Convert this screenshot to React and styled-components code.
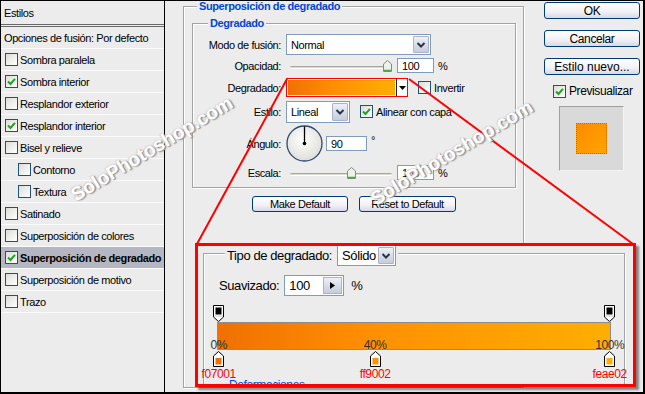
import React from "react";
import styled, { createGlobalStyle } from "styled-components";

const GlobalStyle = createGlobalStyle`
  html, body { margin: 0; padding: 0; background: #ececec; }
  body {
    font-family: "Liberation Sans", Arial, sans-serif;
    font-size: 11px;
    letter-spacing: -0.4px;
    color: #000;
  }
  * { box-sizing: border-box; }
`;

const styleItems = [
  { label: "Sombra paralela" },
  { label: "Sombra interior", checked: true },
  { label: "Resplandor exterior" },
  { label: "Resplandor interior", checked: true },
  { label: "Bisel y relieve" },
  { label: "Contorno", indent: true },
  { label: "Textura", indent: true },
  { label: "Satinado" },
  { label: "Superposición de colores" },
  { label: "Superposición de degradado", checked: true, active: true },
  { label: "Superposición de motivo" },
  { label: "Trazo" },
];

const colorStops = [
  { pct: 0, hex: "f07001", color: "#f07001" },
  { pct: 40, hex: "ff9002", color: "#ff9002" },
  { pct: 100, hex: "feae02", color: "#feae02" },
];

// stop centre inside the editor box
const stopX = (pct) => 8.7 + (pct / 100) * 391;

const Frame = styled.div`
  position: relative;
  width: 645px;
  height: 394px;
  display: flex;
  border: 1px solid #000;
  border-right-width: 2px;
  border-bottom-width: 2px;
  background: #ececec;
  overflow: hidden;
`;

/* ---------- left list ---------- */
const LeftPanel = styled.div`
  width: 164px;
  flex-shrink: 0;
  border-right: 1px solid #000;
  display: flex;
  flex-direction: column;
`;

const PanelHeader = styled.div`
  height: 26px;
  display: flex;
  align-items: center;
  padding-left: 3px;
  border-bottom: 3px double #6a6a6a;
`;

const BlendRow = styled.div`
  height: 22px;
  display: flex;
  align-items: center;
  padding-left: 3px;
  border-bottom: 1px solid #fbfbfb;
`;

const StyleRow = styled.div`
  height: 22px;
  display: flex;
  align-items: center;
  gap: 2px;
  white-space: nowrap;
  padding-left: ${(p) => (p.$indent ? 17 : 4)}px;
  border-bottom: 1px solid #fbfbfb;
  background: ${(p) => (p.$active ? "#b4b7c2" : "transparent")};
  font-weight: ${(p) => (p.$active ? "bold" : "normal")};
`;

/* ---------- generic controls ---------- */
const Box = styled.span`
  width: 13px;
  height: 13px;
  flex-shrink: 0;
  display: inline-flex;
  align-items: center;
  justify-content: center;
  border: 1px solid #1c5180;
  background: linear-gradient(135deg, #dcdcd7, #ffffff);
  margin-left: ${(p) => p.$ml || 0}px;
`;

const Checkbox = ({ checked, ml }) => (
  <Box $ml={ml}>
    {checked && (
      <svg width="9" height="9" viewBox="0 0 9 9">
        <path d="M1 4.5 L3.5 7 L8 1.8" stroke="#21a121" strokeWidth="2" fill="none" />
      </svg>
    )}
  </Box>
);

const SelectBox = styled.div`
  width: ${(p) => p.$w}px;
  height: ${(p) => p.$h || 21}px;
  display: flex;
  align-items: stretch;
  border: 1px solid #7f9db9;
  background: #fff;
  flex-shrink: 0;
`;

const SelectText = styled.span`
  flex: 1;
  display: flex;
  align-items: center;
  padding-left: 4px;
  font-size: ${(p) => p.$fs || 11}px;
`;

const DropBtn = styled.span`
  width: 16px;
  margin: 1px;
  display: flex;
  align-items: center;
  justify-content: center;
  border: 1px solid #aab3ca;
  border-radius: 1px;
  background: linear-gradient(#eef0f6, #c6ccdc);
`;

const Chevron = () => (
  <svg width="10" height="8" viewBox="0 0 10 8">
    <path d="M1.5 2 L5 5.5 L8.5 2" stroke="#2d3142" strokeWidth="2" fill="none" />
  </svg>
);

const Select = ({ value, w, h, fs }) => (
  <SelectBox $w={w} $h={h}>
    <SelectText $fs={fs}>{value}</SelectText>
    <DropBtn>
      <Chevron />
    </DropBtn>
  </SelectBox>
);

const Input = styled.div`
  width: ${(p) => p.$w}px;
  height: ${(p) => p.$h || 15}px;
  margin-left: ${(p) => p.$ml || 0}px;
  flex-shrink: 0;
  display: flex;
  align-items: center;
  padding-left: 4px;
  border: 1px solid #7f9db9;
  background: #fff;
  font-size: ${(p) => p.$fs || 11}px;
`;

const Unit = styled.span`
  margin-left: ${(p) => p.$ml || 4}px;
  align-self: ${(p) => (p.$top ? "flex-start" : "center")};
  margin-top: ${(p) => (p.$top ? 9 : 0)}px;
  font-size: ${(p) => p.$fs || 11}px;
`;

const SliderWrap = styled.div`
  position: relative;
  width: 102px;
  height: 12px;
  margin-left: 4px;
`;

const Track = styled.div`
  position: absolute;
  left: 0;
  right: 0;
  top: 6px;
  height: 3px;
  border-radius: 2px;
  border-top: 1px solid #a9a79c;
  border-bottom: 1px solid #fff;
  background: #dcdad0;
`;

const Thumb = styled.svg`
  position: absolute;
  top: 0;
`;

const Slider = ({ pct }) => (
  <SliderWrap>
    <Track />
    <Thumb width="9" height="12" viewBox="0 0 9 12" style={{ left: `${(pct / 100) * 93}px` }}>
      <path d="M4.5 0.5 L8.5 4 V11.5 H0.5 V4 Z" fill="#eef1ea" stroke="#7c8f78" />
      <path d="M1 10.5 H8" stroke="#3fae3f" strokeWidth="1.5" />
    </Thumb>
  </SliderWrap>
);

const XpButton = styled.div`
  width: ${(p) => p.$w}px;
  height: ${(p) => p.$h || 16}px;
  display: flex;
  align-items: center;
  justify-content: center;
  border: 1px solid #003c74;
  border-radius: 3px;
  background: linear-gradient(#ffffff, #f1f1f6 60%, #d6d8e8);
  font-size: ${(p) => p.$fs || 11}px;
  letter-spacing: ${(p) => p.$ls ?? -0.4}px;
`;

/* ---------- middle column ---------- */
const Main = styled.div`
  flex: 1;
  display: flex;
`;

const MiddleCol = styled.div`
  width: 365px;
  flex-shrink: 0;
  padding: 5px 0 0 18px;
`;

const Group = styled.div`
  position: relative;
  width: ${(p) => p.$w}px;
  height: ${(p) => p.$h}px;
  border: 1px solid #a3a3a3;
  box-shadow: inset 1px 1px 0 #fff, 1px 1px 0 #fff;
  padding: ${(p) => p.$pad || "0"};
`;

const Legend = styled.div`
  position: absolute;
  top: ${(p) => p.$top}px;
  left: ${(p) => p.$left}px;
  padding: 0 2px;
  background: #ececec;
  color: #0046d5;
  font-weight: bold;
  white-space: nowrap;
`;

const LegendControls = styled.div`
  position: absolute;
  top: -9px;
  left: 21px;
  padding: 0 2px;
  background: #ececec;
  display: flex;
  align-items: center;
  gap: 5px;
  font-size: 13px;
`;

const Row = styled.div`
  display: flex;
  align-items: center;
  height: ${(p) => p.$h}px;
  margin-top: ${(p) => p.$mt || 0}px;
  padding-left: ${(p) => p.$pl || 0}px;
`;

const Label = styled.span`
  width: 88px;
  margin-right: 5px;
  text-align: right;
  flex-shrink: 0;
`;

const GradientPick = styled.div`
  width: 122px;
  height: 19px;
  display: flex;
  border: 1px solid #ff0000;
  background: #fff;
  flex-shrink: 0;
`;

const GradientFill = styled.div`
  flex: 1;
  margin: 1px;
  background: linear-gradient(to right, #f07001, #ff9002 45%, #feae02);
`;

const PickArrow = styled.div`
  width: 11px;
  border-left: 1px solid #222;
  display: flex;
  align-items: center;
  justify-content: center;
`;

const CheckText = styled.span`
  margin-left: 3px;
  font-size: ${(p) => p.$fs || 11}px;
`;

const Dial = () => (
  <svg width="37" height="37" viewBox="0 0 37 37">
    <defs>
      <radialGradient id="dialfill" cx="45%" cy="40%" r="65%">
        <stop offset="0%" stopColor="#ffffff" />
        <stop offset="100%" stopColor="#dcdcd6" />
      </radialGradient>
    </defs>
    <circle cx="18.5" cy="18.5" r="17.5" fill="url(#dialfill)" stroke="#30486e" strokeWidth="1.3" />
    <line x1="18.5" y1="18.5" x2="18.5" y2="1.5" stroke="#000" strokeWidth="1.3" />
    <circle cx="18.5" cy="18.5" r="1.8" fill="#000" />
  </svg>
);

const ButtonRow = styled.div`
  width: 324px;
  margin-top: 8px;
  display: flex;
  justify-content: center;
  gap: 11px;
`;

/* ---------- right column ---------- */
const RightCol = styled.div`
  flex: 1;
  padding: 1px 0 0 14px;
  display: flex;
  flex-direction: column;
`;

const ButtonStack = styled.div`
  display: flex;
  flex-direction: column;
  gap: 11px;
`;

const PreviewCheck = styled.div`
  display: flex;
  align-items: center;
  margin: 9px 0 0 9px;
`;

const PreviewBox = styled.div`
  width: 65px;
  height: 65px;
  margin: 8px 0 0 15px;
  display: flex;
  align-items: center;
  justify-content: center;
  background: #d9d9d9;
  border: 1px solid;
  border-color: #a0a0a0 #f4f4f4 #f4f4f4 #a0a0a0;
`;

const PreviewSwatch = styled.div`
  width: 31px;
  height: 31px;
  border: 1px dotted #e85a00;
  background: linear-gradient(135deg, #ff8a00, #ffa400);
`;

/* ---------- zoom callout ---------- */
const Callout = styled.div`
  position: absolute;
  left: 194px;
  top: 242px;
  width: 441px;
  height: 144px;
  border: 3px solid #ff0000;
  box-shadow: 3px 3px 2px rgba(0, 0, 0, 0.45);
  background: #ececec;
  overflow: hidden;
  padding: 7px 0 0 5px;
`;

const SmallArrowBtn = styled.span`
  width: 19px;
  height: 17px;
  margin-left: auto;
  margin-right: 1px;
  display: flex;
  align-items: center;
  justify-content: center;
  border: 1px solid #aab3ca;
  background: linear-gradient(#eef0f6, #c6ccdc);
`;

const Editor = styled.div`
  position: relative;
  width: 410px;
  height: 75px;
  margin: 9px 0 0 6px;
  padding: 17px 0 0 7px;
`;

const Bar = styled.div`
  width: 394px;
  height: 28px;
  border: 1px solid #8c8c8c;
  background: linear-gradient(to right, #f07001 0%, #ff9002 40%, #feae02 100%);
`;

const Marker = styled.svg`
  position: absolute;
`;

const PctLabel = styled.span`
  position: absolute;
  top: 34px;
  transform: translateX(-50%);
  font-size: 12px;
  line-height: 13px;
  color: #333;
`;

const HexLabel = styled.span`
  position: absolute;
  top: 63px;
  transform: translateX(-50%);
  font-size: 12px;
  line-height: 13px;
  color: #ff0000;
`;

const HiddenTitle = styled.div`
  margin: -2px 0 0 25px;
  color: #0046d5;
  font-size: 12px;
  line-height: 14px;
`;

const Overlay = styled.svg`
  position: absolute;
  left: -1px;
  top: -1px;
  pointer-events: none;
`;

const Watermark = styled.span`
  position: absolute;
  white-space: nowrap;
  font-size: 19px;
  font-weight: bold;
  letter-spacing: 0;
  color: #ffffff;
  text-shadow: 1px 1px 0 #9a9a9a, -1px -1px 0 #d8d8d8, 1px 1px 2px #888;
  transform: translate(-50%, -50%) rotate(-31deg);
  pointer-events: none;
`;

const TopStop = ({ x }) => (
  <Marker width="11" height="17" viewBox="0 0 11 17" style={{ left: `${x - 5.5}px`, top: 0 }}>
    <path d="M0.5 0.5 H10.5 V12 L5.5 16.5 L0.5 12 Z" fill="#fff" stroke="#000" />
    <rect x="2.5" y="2.5" width="6" height="7" fill="#000" />
    <path d="M1 11 H10" stroke="#c8c8c8" />
  </Marker>
);

const BottomStop = ({ x, color }) => (
  <Marker width="11" height="16" viewBox="0 0 11 16" style={{ left: `${x - 5.5}px`, top: 46 }}>
    <path d="M5.5 0.5 L10.5 5 V15.5 H0.5 V5 Z" fill="#fff" stroke="#000" />
    <rect x="2.5" y="7" width="6" height="6.5" fill={color} />
  </Marker>
);

export default function App() {
  return (
    <>
      <GlobalStyle />
      <Frame>
        <LeftPanel>
          <PanelHeader>Estilos</PanelHeader>
          <BlendRow>Opciones de fusión: Por defecto</BlendRow>
          {styleItems.map((item) => (
            <StyleRow key={item.label} $indent={item.indent} $active={item.active}>
              <Checkbox checked={item.checked} />
              <span>{item.label}</span>
            </StyleRow>
          ))}
        </LeftPanel>

        <Main>
          <MiddleCol>
            <Group $w={341} $h={382} $pad="16px 7px 0 8px">
              <Legend $top={-7} $left={13}>Superposición de degradado</Legend>
              <Group $w={324} $h={165} $pad="10px 0 0 0">
                <Legend $top={-7} $left={15}>Degradado</Legend>
                <Row $h={21}>
                  <Label>Modo de fusión:</Label>
                  <Select value="Normal" w={145} />
                </Row>
                <Row $h={17} $mt={2}>
                  <Label>Opacidad:</Label>
                  <Slider pct={100} />
                  <Input $w={37} $ml={5}>100</Input>
                  <Unit>%</Unit>
                </Row>
                <Row $h={19} $mt={4}>
                  <Label>Degradado:</Label>
                  <GradientPick>
                    <GradientFill />
                    <PickArrow>
                      <svg width="7" height="4" viewBox="0 0 7 4">
                        <path d="M0 0 H7 L3.5 4 Z" fill="#000" />
                      </svg>
                    </PickArrow>
                  </GradientPick>
                  <Checkbox ml={10} />
                  <CheckText>Invertir</CheckText>
                </Row>
                <Row $h={23} $mt={3}>
                  <Label>Estilo:</Label>
                  <Select value="Lineal" w={64} h={22} />
                  <Checkbox checked ml={10} />
                  <CheckText>Alinear con capa</CheckText>
                </Row>
                <Row $h={37} $mt={2}>
                  <Label>Ángulo:</Label>
                  <Dial />
                  <Input $w={41} $ml={3}>90</Input>
                  <Unit $top>°</Unit>
                </Row>
                <Row $h={17} $mt={2}>
                  <Label>Escala:</Label>
                  <Slider pct={61} />
                  <Input $w={37} $ml={5}>100</Input>
                  <Unit>%</Unit>
                </Row>
              </Group>
              <ButtonRow>
                <XpButton $w={96}>Make Default</XpButton>
                <XpButton $w={97}>Reset to Default</XpButton>
              </ButtonRow>
            </Group>
          </MiddleCol>

          <RightCol>
            <ButtonStack>
              <XpButton $w={96} $h={17} $fs={12}>OK</XpButton>
              <XpButton $w={96} $h={17} $fs={12}>Cancelar</XpButton>
              <XpButton $w={96} $h={17} $fs={12} $ls={0}>Estilo nuevo...</XpButton>
            </ButtonStack>
            <PreviewCheck>
              <Checkbox checked />
              <CheckText $fs={12}>Previsualizar</CheckText>
            </PreviewCheck>
            <PreviewBox>
              <PreviewSwatch />
            </PreviewBox>
          </RightCol>
        </Main>

        <Callout>
          <Group $w={422} $h={200}>
            <LegendControls>
              <span>Tipo de degradado:</span>
              <Select value="Sólido" w={59} fs={13} />
            </LegendControls>
            <Row $h={21} $mt={21} $pl={15}>
              <CheckText $fs={13} style={{ marginLeft: 0 }}>Suavizado:</CheckText>
              <Input $w={60} $h={21} $ml={5} $fs={13}>
                100
                <SmallArrowBtn>
                  <svg width="5" height="7" viewBox="0 0 5 7">
                    <path d="M0 0 L5 3.5 L0 7 Z" fill="#000" />
                  </svg>
                </SmallArrowBtn>
              </Input>
              <Unit $ml={7} $fs={13}>%</Unit>
            </Row>
            <Editor>
              <TopStop x={stopX(0)} />
              <TopStop x={stopX(100)} />
              <Bar />
              {colorStops.map((s) => (
                <React.Fragment key={s.hex}>
                  <PctLabel style={{ left: `${stopX(s.pct)}px` }}>{s.pct}%</PctLabel>
                  <BottomStop x={stopX(s.pct)} color={s.color} />
                  <HexLabel style={{ left: `${stopX(s.pct)}px` }}>{s.hex}</HexLabel>
                </React.Fragment>
              ))}
            </Editor>
            <HiddenTitle>Deformaciones</HiddenTitle>
          </Group>
        </Callout>

        <Overlay width="645" height="394" viewBox="0 0 645 394">
          <line x1="287" y1="79" x2="197" y2="244" stroke="#ff0000" strokeWidth="2" />
          <line x1="409" y1="79" x2="633" y2="244" stroke="#ff0000" strokeWidth="2" />
        </Overlay>

        <Watermark style={{ left: 151, top: 148 }}>SoloPhotoshop.com</Watermark>
        <Watermark style={{ left: 451, top: 152 }}>SoloPhotoshop.com</Watermark>
      </Frame>
    </>
  );
}
